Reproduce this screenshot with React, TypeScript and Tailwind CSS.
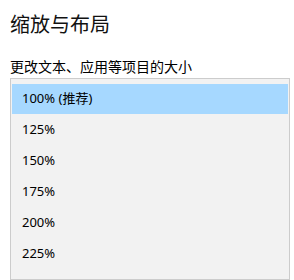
import React from "react";

const items = ["100% (推荐)", "125%", "150%", "175%", "200%", "225%"];

export default function App() {
  return (
    <div
      className="w-[294px] h-[280px] bg-white overflow-hidden text-black"
      style={{ fontFamily: '"Noto Sans", "Noto Sans CJK SC", sans-serif' }}
    >
      <div className="pl-[10px] pt-[11px] text-[20px] leading-[28px] text-[#111]">缩放与布局</div>
      <div className="pl-[10px] mt-[18px] text-[14px] leading-[20px] text-[#000]">
        更改文本、应用等项目的大小
      </div>
      <div className="ml-[10px] mt-[1px] w-[280px] h-[202px] border border-[#cccccc] bg-[#f2f2f2] px-px pt-[4px]">
        {items.map((it, i) => (
          <div
            key={it}
            className={`my-px h-[30px] flex items-center pl-[10px] text-[13px] text-[#000] ${
              i === 0 ? "bg-[#a6d8ff]" : ""
            }`}
          >
            {it}
          </div>
        ))}
      </div>
    </div>
  );
}
